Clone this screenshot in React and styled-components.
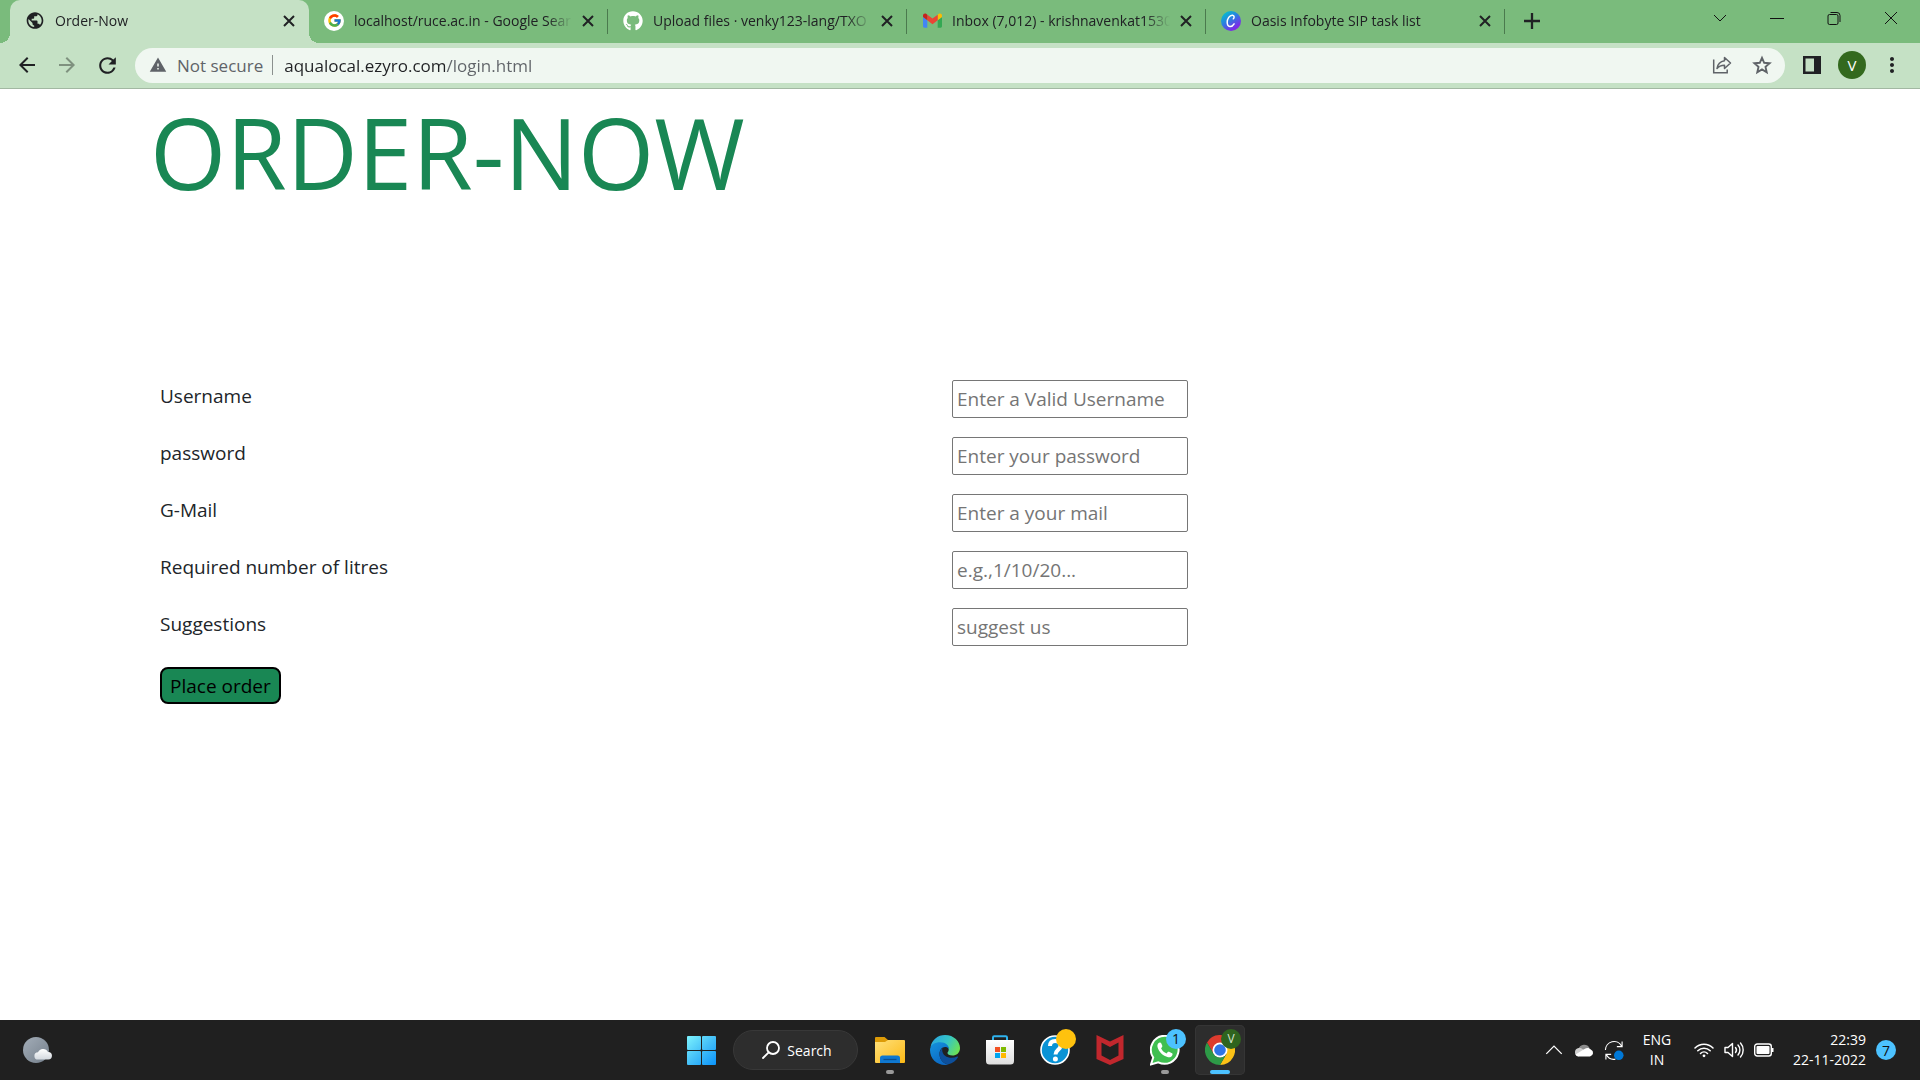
import React from "react";
import styled, { createGlobalStyle } from "styled-components";
import { FcGoogle } from "react-icons/fc";
import { FaGithub } from "react-icons/fa";
import {
  MdPublic,
  MdArrowBack,
  MdArrowForward,
  MdRefresh,
  MdWarning,
  MdMoreVert,
} from "react-icons/md";

const GlobalStyle = createGlobalStyle`
  *, *::before, *::after { box-sizing: border-box; }
  body {
    margin: 0;
    background: #fff;
    font-family: "Open Sans", "Noto Sans", sans-serif;
    color: #212529;
  }
  button, input { font-family: inherit; }
`;

const Screen = styled.div`
  min-height: 100vh;
  display: flex;
  flex-direction: column;
`;

const PlainButton = styled.button`
  border: 0;
  padding: 0;
  background: none;
  color: inherit;
  display: flex;
  align-items: center;
  justify-content: center;
  flex: none;
`;

/* ---------- browser chrome ---------- */

const TabStrip = styled.header`
  display: flex;
  height: 43px;
  padding: 0 1px 0 10px;
  background: #7abb7c;
  color: #202124;
`;

const Tab = styled.div`
  position: relative;
  width: 299px;
  display: flex;
  align-items: center;
  gap: 8px;
  padding: 0 12px 2px 15px;
  border-radius: 10px 10px 0 0;
  background: ${(p) => (p.$active ? "#c5e1c5" : "transparent")};

  &::before,
  &::after {
    content: "";
    display: ${(p) => (p.$active ? "block" : "none")};
    position: absolute;
    bottom: 0;
    width: 10px;
    height: 10px;
  }
  &::before {
    left: -10px;
    background: radial-gradient(circle at 0 0, transparent 10px, #c5e1c5 10px);
  }
  &::after {
    right: -10px;
    background: radial-gradient(circle at 100% 0, transparent 10px, #c5e1c5 10px);
  }
`;

const TabLabel = styled(PlainButton)`
  flex: 1;
  min-width: 0;
  justify-content: flex-start;
  gap: 10px;
  font-size: 14px;
  line-height: 40px;
  text-align: left;
`;

const TabTitle = styled.span`
  flex: 1;
  min-width: 0;
  overflow: hidden;
  white-space: nowrap;
  mask-image: linear-gradient(to right, #000 calc(100% - 24px), transparent);
`;

const TabClose = styled(PlainButton)`
  width: 16px;
  height: 16px;
`;

const TabEdge = styled.span`
  position: absolute;
  right: 0;
  top: 9px;
  width: 1px;
  height: 25px;
  background: #4b7a4e;
`;

const Favicon = styled.span`
  width: 20px;
  height: 20px;
  flex: none;
  display: flex;
  align-items: center;
  justify-content: center;
  border-radius: 50%;
  background: ${(p) => p.$fill || "transparent"};
`;

const Divider = styled.span`
  width: 1px;
  height: 20px;
  background: #8b908e;
`;

const NewTab = styled(PlainButton)`
  width: 54px;
  height: 42px;
`;

const WindowButtons = styled.div`
  display: flex;
  margin-left: auto;
  height: 36px;
`;

const WindowButton = styled(PlainButton)`
  width: 57px;
  color: #111;
`;

const Toolbar = styled.div`
  display: flex;
  align-items: center;
  height: 46px;
  padding: 0 8px 1px 7px;
  background: #c5e1c5;
  border-bottom: 1px solid #a2b8a2;
  color: #202124;
`;

const ToolButton = styled(PlainButton)`
  width: 40px;
  height: 36px;
  color: ${(p) => (p.$muted ? "#7f917f" : "inherit")};
`;

const AddressBar = styled.form`
  flex: 1;
  display: flex;
  align-items: center;
  gap: 9px;
  height: 35px;
  margin: 0 7px 0 8px;
  padding: 0 3px 0 14px;
  border-radius: 18px;
  background: #f0f7f1;
  color: #5f6368;
  font-size: 17px;
`;

const Security = styled.span`
  display: flex;
  align-items: center;
  gap: 10px;
  white-space: nowrap;
`;

const AddressInput = styled.input`
  flex: 1;
  min-width: 0;
  height: 35px;
  padding: 0 2px;
  border: 0;
  outline: 0;
  font-size: 17px;
  background: linear-gradient(to right, #202124 163px, #5f6368 163px);
  background-clip: text;
  -webkit-text-fill-color: transparent;
`;

const AddressActions = styled.div`
  display: flex;
`;

const Avatar = styled.span`
  width: 28px;
  height: 28px;
  border-radius: 50%;
  display: flex;
  align-items: center;
  justify-content: center;
  background: #33691e;
  color: #fff;
  font-size: 15px;
`;

/* ---------- page ---------- */

const Page = styled.main`
  flex: 1;
  width: 100%;
  max-width: 1650px;
  margin: 0 auto;
  padding: 0 15px;
`;

const Title = styled.h1`
  margin: 0;
  padding-top: 3px;
  font-size: 98px;
  line-height: 120px;
  font-weight: 400;
  color: #198754;
`;

const OrderForm = styled.form`
  display: flex;
  flex-direction: column;
  gap: 21px;
  margin-top: 168px;
`;

const Fields = styled.div`
  display: flex;
  flex-direction: column;
  gap: 19px;
`;

const Field = styled.div`
  display: grid;
  grid-template-columns: 44fr 46fr;
  align-items: start;
`;

const FieldLabel = styled.label`
  padding: 0 10px;
  font-size: 19px;
  line-height: 32px;
`;

const FieldInput = styled.input`
  width: 236px;
  height: 38px;
  margin-left: 10px;
  padding: 0 4px;
  border: 1px solid #767676;
  border-radius: 2px;
  background: #fff;
  color: #212529;
  font-size: 19px;

  &::placeholder {
    color: #757575;
    opacity: 1;
  }
`;

const Submit = styled.button`
  align-self: flex-start;
  height: 37px;
  margin-left: 10px;
  padding: 0 8px;
  border: 2px solid #000;
  border-radius: 8px;
  background: #198754;
  color: #000;
  font-size: 19px;
`;

/* ---------- taskbar ---------- */

const Taskbar = styled.footer`
  display: grid;
  grid-template-columns: 1fr auto 1fr;
  align-items: center;
  height: 60px;
  background: #202020;
  color: #fff;
  font-size: 14px;
  line-height: 20px;
`;

const Widgets = styled(PlainButton)`
  width: 50px;
  height: 50px;
  margin-left: 12px;
`;

const Apps = styled.nav`
  display: flex;
  align-items: center;
  gap: 5px;
  padding-left: 1px;
`;

const AppTile = styled(PlainButton)`
  position: relative;
  width: 50px;
  height: 50px;
  border-radius: 5px;
  background: ${(p) => (p.$active ? "#2d2d2d" : "transparent")};
  box-shadow: ${(p) => (p.$active ? "inset 0 0 0 1px #353535" : "none")};

  &::after {
    content: "";
    display: ${(p) => (p.$running ? "block" : "none")};
    position: absolute;
    bottom: 1px;
    width: ${(p) => (p.$active ? 20 : 8)}px;
    height: 4px;
    border-radius: 2px;
    background: ${(p) => (p.$active ? "#4cc2ff" : "#9a9a9a")};
  }
`;

const Badge = styled.span`
  position: absolute;
  top: 4px;
  right: 4px;
  width: 20px;
  height: 20px;
  border-radius: 50%;
  background: ${(p) => p.$fill};
  color: ${(p) => p.$ink || "#111"};
  font-size: ${(p) => p.$font || 14}px;
  line-height: 20px;
  text-align: center;
`;

const SearchPill = styled(PlainButton)`
  width: 125px;
  height: 40px;
  margin: 0 2px;
  padding-left: 3px;
  gap: 7px;
  border: 1px solid #383838;
  border-radius: 20px;
  background: #2d2d2d;
  font-size: 14px;
`;

const Tray = styled.div`
  display: flex;
  align-items: center;
  justify-content: flex-end;
  gap: 10px;
  padding-right: 24px;
`;

const TrayButton = styled(PlainButton)`
  width: 20px;
  height: 40px;
`;

const Language = styled(PlainButton)`
  flex-direction: column;
  width: 46px;
  margin-right: 4px;
  font-size: 14px;
  line-height: 20px;
`;

const Clock = styled(PlainButton)`
  flex-direction: column;
  align-items: flex-end;
  width: 82px;
  font-size: 14px;
  line-height: 20px;
`;

const Notifications = styled(PlainButton)`
  width: 20px;
  height: 20px;
  border-radius: 50%;
  background: #4cc2ff;
  color: #111;
  font-size: 14px;
`;

/* ---------- drawings ---------- */

const GmailIcon = () => (
  <svg width="19" height="15" viewBox="52 42 88 66">
    <path fill="#4285f4" d="M58 108h14V74L52 59v43c0 3.3 2.7 6 6 6" />
    <path fill="#34a853" d="M120 108h14c3.3 0 6-2.7 6-6V59l-20 15" />
    <path fill="#fbbc04" d="M120 48v26l20-15v-8c0-7.4-8.5-11.600-14.400-7.200" />
    <path fill="#ea4335" d="M72 74V48l24 18 24-18v26L96 92" />
    <path fill="#c5221f" d="M52 51v8l20 15V48l-5.600-4.200C60.500 39.400 52 43.600 52 51" />
  </svg>
);

const CanvaIcon = () => (
  <svg width="20" height="20" viewBox="0 0 20 20">
    <defs>
      <linearGradient id="canva" x1="0" y1="0" x2="0.7" y2="1">
        <stop offset="0.100" stopColor="#00c4cc" />
        <stop offset="0.500" stopColor="#2b7de0" />
        <stop offset="0.900" stopColor="#7d2ae8" />
      </linearGradient>
    </defs>
    <circle cx="10" cy="10" r="10" fill="url(#canva)" />
    <path d="M12.300 7.800c1-.6 1.400-3.300-.8-3.600C8.500 3.900 6.200 8 6.200 11.300c0 5.600 4.700 5.300 6.900 1.600" fill="none" stroke="#fff" strokeWidth="1.500" strokeLinecap="round" />
  </svg>
);

const Line = ({ d, w = 14, sw = 1 }) => (
  <svg width={w} height={w} viewBox="0 0 14 14" fill="none" stroke="currentColor" strokeWidth={sw}>
    <path d={d} />
  </svg>
);

const StarIcon = () => (
  <svg width="20" height="20" viewBox="0 0 20 20" fill="none" stroke="currentColor" strokeWidth="1.900">
    <path d="M10 2.800l2.200 5 5.400.5-4.100 3.600 1.200 5.300L10 14.400l-4.700 2.800 1.200-5.300-4.100-3.600 5.400-.5z" />
  </svg>
);

const ShareIcon = () => (
  <svg width="20" height="20" viewBox="0 0 20 20" fill="none" stroke="currentColor" strokeWidth="1.500">
    <path d="M1.700 4.500v13.300h13.500v-3.300" />
    <path d="M12.500 2.500l6 5.500-6 5.500v-3.300c-3.500 0-5.800 1-7.500 3.300.6-4 3-7 7.500-7.700z" strokeLinejoin="round" />
  </svg>
);

const PanelIcon = () => (
  <svg width="18" height="18" viewBox="0 0 18 18">
    <path fill="currentColor" fillRule="evenodd" d="M0 0h18v18H0zM2.500 2.500v13H11v-13z" />
  </svg>
);

const WeatherIcon = () => (
  <svg width="30" height="28" viewBox="0 0 30 28">
    <defs>
      <linearGradient id="moon" x1="0" y1="0" x2="1" y2="1">
        <stop offset="0" stopColor="#a3adb8" />
        <stop offset="1" stopColor="#747f8b" />
      </linearGradient>
      <linearGradient id="cloud" x1="0" y1="0" x2="0" y2="1">
        <stop offset="0" stopColor="#fff" />
        <stop offset="1" stopColor="#d3d9df" />
      </linearGradient>
    </defs>
    <circle cx="14" cy="14" r="13" fill="url(#moon)" />
    <path d="M16 23.500a3.500 3.500 0 0 1 0-7.200 5.500 5.500 0 0 1 10-.4 3.800 3.800 0 0 1 .3 7.600z" fill="url(#cloud)" />
  </svg>
);

const StartIcon = () => (
  <svg width="29" height="29" viewBox="0 0 29 29">
    <defs>
      <linearGradient id="win" gradientUnits="userSpaceOnUse" x1="0" y1="0" x2="29" y2="29">
        <stop offset="0" stopColor="#7df3fd" />
        <stop offset="0.500" stopColor="#45c0f8" />
        <stop offset="1" stopColor="#0a93fb" />
      </linearGradient>
    </defs>
    <g fill="url(#win)">
      <rect width="14" height="14" rx="1" />
      <rect x="15" width="14" height="14" rx="1" />
      <rect y="15" width="14" height="14" rx="1" />
      <rect x="15" y="15" width="14" height="14" rx="1" />
    </g>
  </svg>
);

const SearchIcon = () => (
  <svg width="18" height="18" viewBox="0 0 18 18" fill="none" stroke="currentColor" strokeWidth="1.800">
    <circle cx="11" cy="7" r="6" />
    <path d="M6.700 11.300L1 17" strokeLinecap="round" />
  </svg>
);

const ExplorerIcon = () => (
  <svg width="30" height="28" viewBox="0 0 30 28">
    <defs>
      <linearGradient id="folder" x1="0" y1="0" x2="1" y2="1">
        <stop offset="0" stopColor="#ffe07a" />
        <stop offset="1" stopColor="#fcb915" />
      </linearGradient>
    </defs>
    <path d="M0 2a1 1 0 0 1 1-1h8.500l3.500 3h16v5H0z" fill="#dd9b07" />
    <path d="M0 6h10l3-2h16a1 1 0 0 1 1 1v21a1 1 0 0 1-1 1H1a1 1 0 0 1-1-1z" fill="url(#folder)" />
    <path d="M5 27v-5a2.500 2.500 0 0 1 2.500-2.500h15A2.500 2.500 0 0 1 25 22v5z" fill="#0f78d1" />
    <path d="M8.500 23.500h13" stroke="#0a4f93" strokeWidth="1.300" />
  </svg>
);

const EdgeIcon = () => (
  <svg width="30" height="30" viewBox="0 0 30 30">
    <defs>
      <linearGradient id="edgeTop" x1="0" y1="0.300" x2="1" y2="0.700">
        <stop offset="0" stopColor="#2aa7e0" />
        <stop offset="0.500" stopColor="#35c5c6" />
        <stop offset="1" stopColor="#6fe34f" />
      </linearGradient>
      <linearGradient id="edgeLeft" x1="0" y1="0" x2="0.600" y2="1">
        <stop offset="0" stopColor="#1593dd" />
        <stop offset="1" stopColor="#0b68c4" />
      </linearGradient>
    </defs>
    <path d="M.5 12C2 4.500 8 0 15 0c9 0 15 6.500 15 13 0 5-3.700 7.500-7.500 7.500-3.200 0-5-1.300-5-2.500s1.200-1.200 1.200-3.500c0-3.500-3.500-6.500-8.200-6.500C6 8 2.500 9.500.5 12z" fill="url(#edgeTop)" />
    <path d="M0 15C0 9.500 5.300 7.200 10 7.200c6 0 9 3.500 9 7-1-1.800-2.500-2.200-4-2.200-3 0-5.500 2.800-5.500 7 0 5.500 4.500 10.300 9 10.300-1.200.5-2.500.7-3.500.7C6.500 30 0 23.500 0 15z" fill="url(#edgeLeft)" />
    <path d="M12.500 13c-2 1.500-3 3.800-3 6 0 5.500 4.500 10.300 9 10.300 4-.9 7.500-3.500 9.500-7 .2-.7-.2-1-.8-.7-6.200 3-15 .4-15-6.600 0-.8.100-1.500.3-2z" fill="#0d4f9b" />
  </svg>
);

const StoreIcon = () => (
  <svg width="30" height="30" viewBox="0 0 30 30">
    <defs>
      <linearGradient id="bag" x1="0" y1="0" x2="0" y2="1">
        <stop offset="0" stopColor="#fff" />
        <stop offset="1" stopColor="#dedede" />
      </linearGradient>
    </defs>
    <path d="M8 7V2.500A1.200 1.200 0 0 1 9.200 1.300h11.600A1.200 1.200 0 0 1 22 2.500V7" fill="none" stroke="#2fb3ee" strokeWidth="2" />
    <path d="M1 5h28v21a3.500 3.500 0 0 1-3.500 3.500h-21A3.500 3.500 0 0 1 1 26z" fill="url(#bag)" />
    <path fill="#f25022" d="M10 12h5v5h-5z" />
    <path fill="#7fba00" d="M16 12h5v5h-5z" />
    <path fill="#00a4ef" d="M10 18h5v5h-5z" />
    <path fill="#ffb900" d="M16 18h5v5h-5z" />
  </svg>
);

const HelpIcon = () => (
  <svg width="30" height="30" viewBox="0 0 30 30">
    <circle cx="15" cy="15" r="14" fill="#0a93d5" stroke="#fff" strokeWidth="1.600" />
    <path d="M10 11c0-3.500 2.300-5 5.200-5s5.300 1.700 5.300 4.700c0 4-5 4.300-5 8.800" fill="none" stroke="#fff" strokeWidth="4" />
    <circle cx="15.400" cy="24" r="2.500" fill="#fff" />
  </svg>
);

const McAfeeIcon = () => (
  <svg width="28" height="30" viewBox="0 0 28 30">
    <path fill="#c1272d" fillRule="evenodd" d="M.5 0L14 6.500 27.500 0v24L14 30 .5 24zM5.500 7.500v13L14 25l8.500-4.500v-13L14 12z" />
  </svg>
);

const WhatsAppIcon = () => (
  <svg width="30" height="31" viewBox="0 0 30 31">
    <path d="M15.200.8A14 14 0 1 1 8.300 27.300L1 29.500l2.200-7A14 14 0 0 1 15.200.8z" fill="#3fbf50" stroke="#fff" strokeWidth="2" />
    <path d="M9.800 7.500c-1.800.4-2.800 2.300-2.300 4.600 1.300 5 5.300 9 10.600 10.200 2 .3 4-.8 4.400-2.600.2-1-.2-1.300-1-1.700l-2.400-1.200c-.6-.3-1-.2-1.400.3l-1 1.300c-2.700-1-4.500-2.700-5.600-5.200l1-1.300c.3-.4.3-.8.100-1.300l-1-2.400c-.3-.6-.7-.8-1.400-.7z" fill="#fff" />
  </svg>
);

const ChromeIcon = () => (
  <svg width="30" height="30" viewBox="0 0 48 48">
    <path d="M24 24l10.400 6L24 48A24 24 0 0 0 44.800 12H24z" fill="#fbc116" />
    <path d="M24 12h20.800A24 24 0 0 0 3.200 12l10.400 18z" fill="#dd3b2e" />
    <path d="M3.200 12l10.400 18A12 12 0 0 0 34.400 30L24 48A24 24 0 0 1 3.200 12z" fill="#2d9a47" />
    <circle cx="24" cy="24" r="12" fill="#fff" />
    <circle cx="24" cy="24" r="9.300" fill="#2f74e6" />
  </svg>
);

const CloudIcon = () => (
  <svg width="20" height="14" viewBox="0 0 20 14">
    <path d="M4.500 6a6 6 0 0 1 11-1l-6 4z" fill="#8d8d8d" />
    <path d="M4.500 13.500A4.300 4.300 0 0 1 4.800 5c2 0 3 .4 5 1.800l-5.500 6.700z" fill="#cfcfcf" />
    <path d="M1.500 11.500l9-5.500c2-1.500 5-1.500 6.300.6A3.600 3.600 0 0 1 16 13.500H4.500c-1.300 0-2.400-.8-3-2z" fill="#fff" />
  </svg>
);

const SyncIcon = () => (
  <svg width="21" height="21" viewBox="0 0 21 21" fill="none" stroke="#fff" strokeWidth="1.200">
    <path d="M1.500 10A9 9 0 0 1 18.500 6M19 1v5.500h-5.500" />
    <path d="M12 19.600A9 9 0 0 1 2.500 15M2 20v-5.500h5.500" />
    <circle cx="15.500" cy="15.500" r="5" fill="#0078d7" stroke="none" />
  </svg>
);

const WifiIcon = () => (
  <svg width="20" height="16" viewBox="0 0 20 16" fill="none" stroke="#fff" strokeWidth="1.500" strokeLinecap="round">
    <path d="M1 6a12.500 12.500 0 0 1 18 0M3.800 8.800a8.700 8.700 0 0 1 12.400 0M6.500 11.500a5 5 0 0 1 7 0" />
    <circle cx="10" cy="13.800" r="1.400" fill="#fff" stroke="none" />
  </svg>
);

const VolumeIcon = () => (
  <svg width="20" height="18" viewBox="0 0 20 18" fill="none" stroke="#fff" strokeWidth="1.400" strokeLinecap="round" strokeLinejoin="round">
    <path d="M1 6.500h3l4.500-4v13l-4.500-4H1zM11.500 6.500a4 4 0 0 1 0 5M14 4a7.500 7.500 0 0 1 0 10M16.500 2a10.500 10.500 0 0 1 0 14" />
  </svg>
);

const BatteryIcon = () => (
  <svg width="20" height="14" viewBox="0 0 20 14">
    <rect x="0.700" y="1" width="16.600" height="12" rx="2.500" fill="none" stroke="#fff" strokeWidth="1.400" />
    <rect x="2.500" y="3" width="13" height="8" rx="1" fill="#fff" />
    <path d="M18 5h1.500v4H18z" fill="#fff" />
  </svg>
);

const tabs = [
  { title: "Order-Now", icon: <MdPublic size={21} />, active: true },
  { title: "localhost/ruce.ac.in - Google Sear", icon: <FcGoogle size={15} />, fill: "#fff" },
  { title: "Upload files · venky123-lang/TXO", icon: <FaGithub size={20} color="#fff" /> },
  { title: "Inbox (7,012) - krishnavenkat1530", icon: <GmailIcon /> },
  { title: "Oasis Infobyte SIP task list", icon: <CanvaIcon /> },
];

const fields = [
  { id: "username", label: "Username", type: "text", hint: "Enter a Valid Username" },
  { id: "password", label: "password", type: "password", hint: "Enter your password" },
  { id: "mail", label: "G-Mail", type: "email", hint: "Enter a your mail" },
  { id: "litres", label: "Required number of litres", type: "text", hint: "e.g.,1/10/20..." },
  { id: "suggestions", label: "Suggestions", type: "text", hint: "suggest us" },
];

export default function App() {
  return (
    <Screen>
      <GlobalStyle />
      <TabStrip>
        {tabs.map((t) => (
          <Tab key={t.title} $active={t.active}>
            <TabLabel type="button">
              <Favicon $fill={t.fill}>{t.icon}</Favicon>
              <TabTitle>{t.title}</TabTitle>
            </TabLabel>
            <TabClose type="button" aria-label={`Close ${t.title}`}>
              <Line sw={2} d="M2 2l10 10M12 2L2 12" />
            </TabClose>
            {!t.active && <TabEdge />}
          </Tab>
        ))}
        <NewTab type="button" aria-label="New tab">
          <Line w={16} sw={2} d="M7 0v14M0 7h14" />
        </NewTab>
        <WindowButtons>
          <WindowButton type="button" aria-label="Search tabs">
            <Line d="M1 4l6 6 6-6" />
          </WindowButton>
          <WindowButton type="button" aria-label="Minimize">
            <Line d="M0 7.500h14" />
          </WindowButton>
          <WindowButton type="button" aria-label="Restore">
            <Line d="M2.500 3.500h7a1.500 1.500 0 0 1 1.500 1.500v7a1.500 1.500 0 0 1-1.500 1.500h-7A1.500 1.500 0 0 1 1 12V5a1.500 1.500 0 0 1 1.500-1.500zM3.500 1.500h6.500a3 3 0 0 1 3 3V11" />
          </WindowButton>
          <WindowButton type="button" aria-label="Close window">
            <Line d="M1 1l12 12M13 1L1 13" />
          </WindowButton>
        </WindowButtons>
      </TabStrip>

      <Toolbar>
        <ToolButton type="button" aria-label="Back">
          <MdArrowBack size={24} />
        </ToolButton>
        <ToolButton type="button" aria-label="Forward" $muted>
          <MdArrowForward size={24} />
        </ToolButton>
        <ToolButton type="button" aria-label="Reload">
          <MdRefresh size={25} />
        </ToolButton>
        <AddressBar onSubmit={(e) => e.preventDefault()}>
          <Security>
            <MdWarning size={18} />
            Not secure
          </Security>
          <Divider />
          <AddressInput aria-label="Address" defaultValue="aqualocal.ezyro.com/login.html" spellCheck={false} />
          <AddressActions>
            <ToolButton type="button" aria-label="Share">
              <ShareIcon />
            </ToolButton>
            <ToolButton type="button" aria-label="Bookmark">
              <StarIcon />
            </ToolButton>
          </AddressActions>
        </AddressBar>
        <ToolButton type="button" aria-label="Side panel">
          <PanelIcon />
        </ToolButton>
        <ToolButton type="button" aria-label="Profile">
          <Avatar>V</Avatar>
        </ToolButton>
        <ToolButton type="button" aria-label="Menu">
          <MdMoreVert size={24} />
        </ToolButton>
      </Toolbar>

      <Page>
        <Title>ORDER-NOW</Title>
        <OrderForm onSubmit={(e) => e.preventDefault()}>
          <Fields>
            {fields.map((f) => (
              <Field key={f.id}>
                <FieldLabel htmlFor={f.id}>{f.label}</FieldLabel>
                <FieldInput id={f.id} type={f.type} placeholder={f.hint} />
              </Field>
            ))}
          </Fields>
          <Submit type="submit">Place order</Submit>
        </OrderForm>
      </Page>

      <Taskbar>
        <Widgets type="button" aria-label="Weather">
          <WeatherIcon />
        </Widgets>
        <Apps>
          <AppTile type="button" aria-label="Start">
            <StartIcon />
          </AppTile>
          <SearchPill type="button">
            <SearchIcon />
            Search
          </SearchPill>
          <AppTile type="button" aria-label="File Explorer" $running>
            <ExplorerIcon />
          </AppTile>
          <AppTile type="button" aria-label="Edge">
            <EdgeIcon />
          </AppTile>
          <AppTile type="button" aria-label="Store">
            <StoreIcon />
          </AppTile>
          <AppTile type="button" aria-label="Help">
            <HelpIcon />
            <Badge $fill="#ffc20e" />
          </AppTile>
          <AppTile type="button" aria-label="McAfee">
            <McAfeeIcon />
          </AppTile>
          <AppTile type="button" aria-label="WhatsApp" $running>
            <WhatsAppIcon />
            <Badge $fill="#4cc2ff">1</Badge>
          </AppTile>
          <AppTile type="button" aria-label="Chrome" $running $active>
            <ChromeIcon />
            <Badge $fill="#2f641e" $ink="#d5e3cf" $font={12}>V</Badge>
          </AppTile>
        </Apps>
        <Tray>
          <TrayButton type="button" aria-label="Hidden icons">
            <Line w={18} d="M1 10l6-6 6 6" />
          </TrayButton>
          <TrayButton type="button" aria-label="OneDrive">
            <CloudIcon />
          </TrayButton>
          <TrayButton type="button" aria-label="Updates">
            <SyncIcon />
          </TrayButton>
          <Language type="button">
            <span>ENG</span>
            <span>IN</span>
          </Language>
          <TrayButton type="button" aria-label="Wi-Fi">
            <WifiIcon />
          </TrayButton>
          <TrayButton type="button" aria-label="Volume">
            <VolumeIcon />
          </TrayButton>
          <TrayButton type="button" aria-label="Battery">
            <BatteryIcon />
          </TrayButton>
          <Clock type="button">
            <span>22:39</span>
            <span>22-11-2022</span>
          </Clock>
          <Notifications type="button">7</Notifications>
        </Tray>
      </Taskbar>
    </Screen>
  );
}
